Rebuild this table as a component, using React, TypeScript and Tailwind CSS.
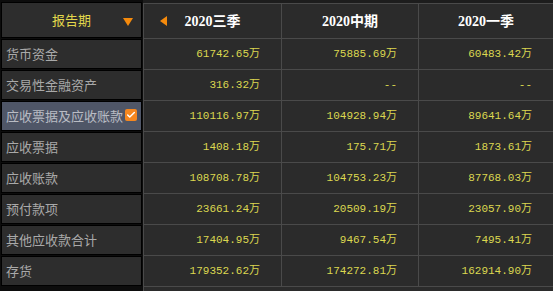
import { Check } from 'lucide-react';

const rows = [
  { name: '货币资金', v: ['61742.65万', '75885.69万', '60483.42万'] },
  { name: '交易性金融资产', v: ['316.32万', '--', '--'] },
  { name: '应收票据及应收账款', v: ['110116.97万', '104928.94万', '89641.64万'], active: true },
  { name: '应收票据', v: ['1408.18万', '175.71万', '1873.61万'] },
  { name: '应收账款', v: ['108708.78万', '104753.23万', '87768.03万'] },
  { name: '预付款项', v: ['23661.24万', '20509.19万', '23057.90万'] },
  { name: '其他应收款合计', v: ['17404.95万', '9467.54万', '7495.41万'] },
  { name: '存货', v: ['179352.62万', '174272.81万', '162914.90万'] },
];

const periods = ['2020三季', '2020中期', '2020一季'];

export default function App() {
  return (
    <div className="flex w-[553px] h-[291px] overflow-hidden bg-[#2b2b2b]">
      {/* left: item names */}
      <div className="w-[143px] shrink-0 flex flex-col bg-[#0c0c0c] pt-[2px]">
        <div className="h-[36px] mx-[1px] mb-[1px] border border-black bg-[#2d2d2d] flex items-center relative">
          <span className="flex-1 text-center text-[13px] text-[#e3d84c] font-['Noto_Sans_CJK_SC',sans-serif]">报告期</span>
          <span className="absolute right-[8px] top-[15px] w-0 h-0 border-l-[5px] border-r-[5px] border-t-[8px] border-l-transparent border-r-transparent border-t-[#f58a0c]" />
        </div>
        {rows.map((r) => (
          <div
            key={r.name}
            className={`h-[30px] mx-[1px] mb-[1px] border border-black flex items-center pl-[4px] relative ${r.active ? 'bg-[#4f5667]' : 'bg-[#2d2d2d]'}`}
          >
            <span className={`text-[13px] whitespace-nowrap font-['Noto_Sans_CJK_SC',sans-serif] ${r.active ? 'text-[#b9bcc4]' : 'text-[#a9a9a9]'}`}>
              {r.name}
            </span>
            {r.active && (
              <span className="absolute left-[123px] top-[7px] w-[12px] h-[12px] rounded-[2px] bg-[#f5871f] flex items-center justify-center">
                <Check size={10} strokeWidth={3.5} className="text-white" />
              </span>
            )}
          </div>
        ))}
      </div>

      {/* right: data grid */}
      <div className="flex-1 flex flex-col pt-[3px] bg-[#1d1d1d]">
        <div className="flex-1 border-t border-l border-[#4a4a4a] bg-[#2b2b2b]">
          <div className="grid grid-cols-[138px_137px_1fr] h-[35px] border-b border-[#4a4a4a]">
            {periods.map((p, i) => (
              <div
                key={p}
                className={`relative flex items-center justify-center ${i < 2 ? 'border-r border-[#4a4a4a]' : ''}`}
              >
                {i === 0 && (
                  <span className="absolute left-[16px] top-[12px] w-0 h-0 border-t-[5px] border-b-[5px] border-r-[7px] border-t-transparent border-b-transparent border-r-[#f58a0c]" />
                )}
                <span className="text-[14px] font-bold text-white font-['Liberation_Serif','Noto_Sans_CJK_SC',serif]">{p}</span>
              </div>
            ))}
          </div>
          {rows.map((r) => (
            <div key={r.name} className="grid grid-cols-[138px_137px_1fr] h-[31px] border-b border-[#4a4a4a]">
              {r.v.map((v, i) => (
                <div
                  key={i}
                  className={`flex items-center justify-end pr-[21px] ${i < 2 ? 'border-r border-[#4a4a4a]' : ''}`}
                >
                  <span className="text-[11px] text-[#dcd850] whitespace-nowrap font-['Liberation_Mono','Noto_Sans_CJK_SC',monospace]">
                    {v}
                  </span>
                </div>
              ))}
            </div>
          ))}
        </div>
      </div>
    </div>
  );
}
